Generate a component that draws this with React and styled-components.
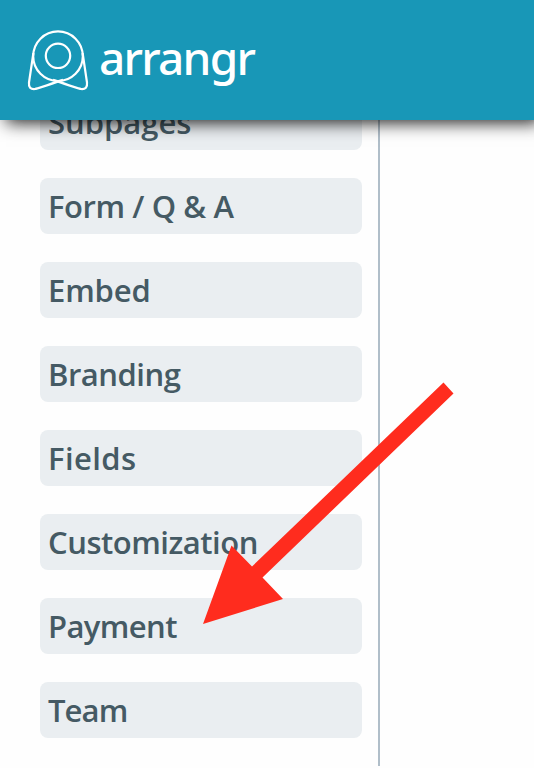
import styled, { createGlobalStyle } from "styled-components";

const GlobalStyle = createGlobalStyle`
    * {
        box-sizing: border-box;
    }
    body {
        margin: 0;
        background: #fefefe;
    }
`;
const Page = styled.div`
    position: relative;
    display: flex;
    flex-direction: column;
    height: 768px;
    padding-bottom: 2px;
    overflow: hidden;
    font-family: "Open Sans", "Noto Sans", sans-serif;
`;
const Header = styled.header`
    position: relative;
    z-index: 1;
    flex: none;
    display: flex;
    align-items: center;
    height: 120px;
    padding-left: 26px;
    background: #1897b7;
    box-shadow: 6px 3px 16px rgba(0, 0, 0, 0.85), 16px 3px 16px -8px rgba(0, 0, 0, 0.1);
`;
const Wordmark = styled.div`
    margin: -6px 0 0 9px;
    color: white;
    font-family: "Noto Sans", sans-serif;
    font-size: 46px;
    font-weight: 500;
    line-height: 64px;
    letter-spacing: -1.75px;
`;
const Body = styled.div`
    flex: 1;
    display: flex;
    min-height: 0;
    overflow: hidden;
`;
const Sidebar = styled.nav`
    flex: none;
    display: flex;
    flex-direction: column;
    gap: 28px;
    width: 380px;
    margin-top: -26px;
    padding: 0 16px 0 40px;
    border-right: 2px solid #b0bec9;
`;
const Item = styled.a`
    flex: none;
    height: 56px;
    padding-left: 8px;
    border-radius: 8px;
    background: #eaeef1;
    color: #455a64;
    font-size: 31px;
    font-weight: 600;
    line-height: 57px;
    letter-spacing: ${(props) => props.$spacing}px;
    white-space: nowrap;
`;
const Pointer = styled.svg`
    position: absolute;
    z-index: 2;
    top: 382px;
    left: 203px;
`;

const items = [
    { label: "Subpages", spacing: 0 },
    { label: "Form / Q & A", spacing: -0.42 },
    { label: "Embed", spacing: -0.15 },
    { label: "Branding", spacing: -0.5 },
    { label: "Fields", spacing: 0.4 },
    { label: "Customization", spacing: -0.48 },
    { label: "Payment", spacing: -0.6 },
    { label: "Team", spacing: -0.9 },
];

const Logo = () => (
    <svg width="64" height="64" viewBox="26 28 64 64" fill="none" stroke="white" strokeWidth="2.2">
        <circle cx="58" cy="56.2" r="24.8" />
        <circle cx="58" cy="55.8" r="12.2" />
        <path d="M33.4 53L29 82.5Q28.2 89.6 35 89Q37 88.7 63 79.9" />
        <path d="M82.6 53L87 82.5Q87.8 89.6 81 89Q79 88.7 53 79.9" />
    </svg>
);

const App = () => {
    return (
        <>
            <GlobalStyle />
            <Page>
                <Header>
                    <Logo />
                    <Wordmark>arrangr</Wordmark>
                </Header>
                <Body>
                    <Sidebar>
                        {items.map((item) => (
                            <Item key={item.label} $spacing={item.spacing}>
                                {item.label}
                            </Item>
                        ))}
                    </Sidebar>
                </Body>
                <Pointer width="251" height="243" viewBox="203 382 251 243">
                    <path
                        fill="#ff2c1e"
                        d="M203 624L231.5 545.5L252 566.5L443.5 382.5L453.5 393.5L262.5 577.5L283 599Z"
                    />
                </Pointer>
            </Page>
        </>
    );
};

export default App;
